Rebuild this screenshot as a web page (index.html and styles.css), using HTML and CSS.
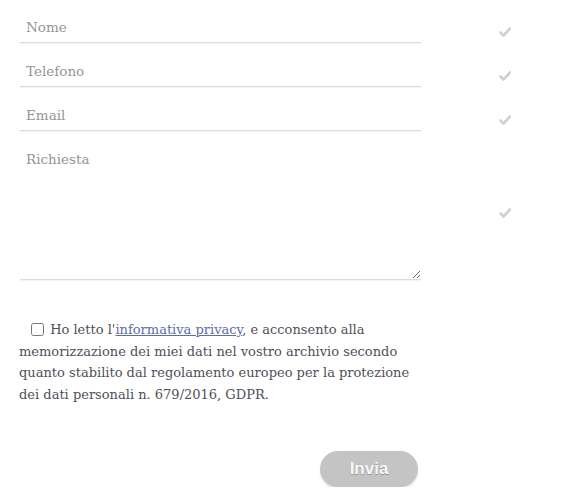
FILE: index.html
```html
<!DOCTYPE html>
<html>
<head>
  <meta charset="UTF-8">
  <title>Contatti</title>
  <link rel="stylesheet" href="styles.css">
</head>
<body>
  <form class="contact">
    <div class="row">
      <input class="field" type="text" placeholder="Nome">
      <span class="ok"><svg viewBox="0 0 12 10" width="12" height="10"><path d="M1.5 5.5 L4.5 8.5 L11 1.5" /></svg></span>
    </div>
    <div class="row">
      <input class="field" type="text" placeholder="Telefono">
      <span class="ok"><svg viewBox="0 0 12 10" width="12" height="10"><path d="M1.5 5.5 L4.5 8.5 L11 1.5" /></svg></span>
    </div>
    <div class="row">
      <input class="field" type="email" placeholder="Email">
      <span class="ok"><svg viewBox="0 0 12 10" width="12" height="10"><path d="M1.5 5.5 L4.5 8.5 L11 1.5" /></svg></span>
    </div>
    <div class="row">
      <textarea class="field area" placeholder="Richiesta"></textarea>
      <span class="ok ok-area"><svg viewBox="0 0 12 10" width="12" height="10"><path d="M1.5 5.5 L4.5 8.5 L11 1.5" /></svg></span>
    </div>

    <p class="privacy">
      <input type="checkbox" class="check">
      Ho letto l'<a href="#">informativa privacy</a>, e acconsento alla
      memorizzazione dei miei dati nel vostro archivio secondo
      quanto stabilito dal regolamento europeo per la protezione
      dei dati personali n. 679/2016, GDPR.
    </p>

    <div class="actions">
      <button type="button" class="send">Invia</button>
    </div>
  </form>
</body>
</html>
```

FILE: styles.css
```css
body {
  margin: 0;
  background: #fff;
  font-family: "DejaVu Serif", serif;
}
.contact {
  width: 421px;
  padding-left: 20px;
}
.row {
  display: flex;
  width: 520px;
  margin-bottom: 1px;
}
.field {
  box-sizing: border-box;
  width: 401px;
  height: 43px;
  margin: 0;
  padding: 11px 6px 0;
  border: 0;
  border-bottom: 1px solid #dcdcdc;
  box-shadow: 0 1px 0 #f4f4f4;
  outline: none;
  font-family: "DejaVu Serif", serif;
  font-size: 13.5px;
  color: #555;
  background: transparent;
}
.field::placeholder {
  color: #959595;
}
.area {
  height: 148px;
  padding-top: 19px;
  resize: vertical;
}
.ok {
  margin-left: 78px;
  margin-top: 27px;
}
.ok-area {
  margin-top: 76px;
}
.ok svg {
  display: block;
  fill: none;
  stroke: #d0d0d0;
  stroke-width: 2.6;
  stroke-linecap: round;
  stroke-linejoin: round;
}
.privacy {
  width: 392px;
  margin: 39px 0 0 -1px;
  font-size: 13px;
  line-height: 21.5px;
  color: #4f4f5a;
}
.check {
  width: 13px;
  height: 13px;
  margin: 0 2px 0 12px;
  vertical-align: -2px;
}
.privacy a {
  color: #5d6bb3;
}
.actions {
  display: flex;
  justify-content: flex-end;
  width: 398px;
  margin-top: 46px;
}
.send {
  width: 98px;
  height: 36px;
  border: 0;
  border-radius: 18px;
  background: #c4c4c4;
  box-shadow: 0 2px 2px rgba(0, 0, 0, 0.12);
  color: #f7f7f7;
  font-family: "Liberation Sans", Arial, sans-serif;
  font-weight: bold;
  font-size: 17px;
  text-shadow: 0 1px 1px rgba(0, 0, 0, 0.25);
  cursor: pointer;
}
```
